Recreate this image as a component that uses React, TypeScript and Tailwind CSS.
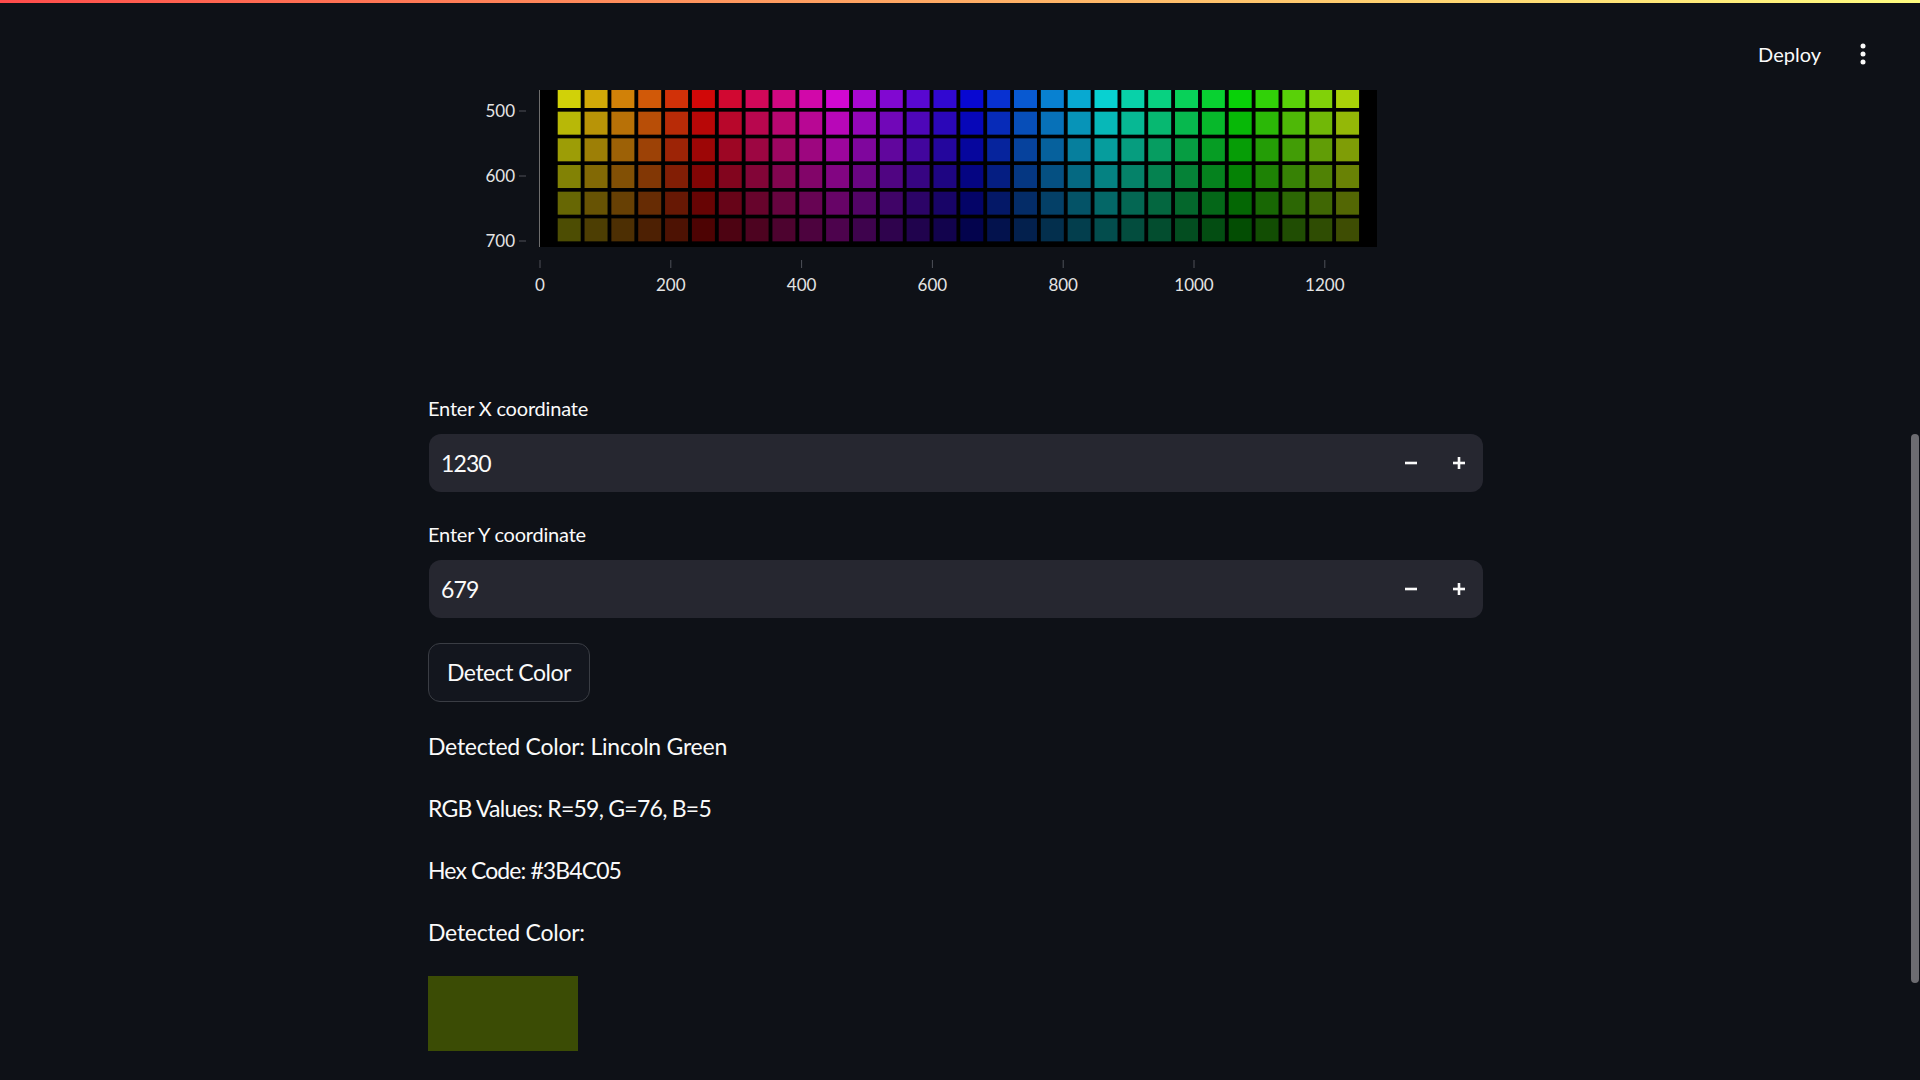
import React from 'react'

const COLS = 30
const VALUES = [0.82, 0.72, 0.615, 0.51, 0.405, 0.3]

// page -> svg coords (svg sits at x=428, y=90)
const OX = 428
const OY = 90

function hsv(h: number, s: number, v: number) {
  const hh = ((h % 360) + 360) % 360
  const c = v * s
  const x = c * (1 - Math.abs(((hh / 60) % 2) - 1))
  const m = v - c
  let r = 0, g = 0, b = 0
  if (hh < 60) [r, g, b] = [c, x, 0]
  else if (hh < 120) [r, g, b] = [x, c, 0]
  else if (hh < 180) [r, g, b] = [0, c, x]
  else if (hh < 240) [r, g, b] = [0, x, c]
  else if (hh < 300) [r, g, b] = [x, 0, c]
  else [r, g, b] = [c, 0, x]
  const to = (n: number) => Math.round((n + m) * 255)
  return `rgb(${to(r)},${to(g)},${to(b)})`
}

function ColorChart() {
  const xOf = (t: number) => 540 - OX + t * 0.654
  const yOf = (t: number) => 241 - OY - (700 - t) * 0.65
  const xTicks = [0, 200, 400, 600, 800, 1000, 1200]
  const yTicks = [500, 600, 700]

  return (
    <svg width={1055} height={305} className="block" fontFamily="Lato, sans-serif">
      <rect x={112} y={-10} width={837} height={167} fill="#000" />
      {VALUES.map((v, k) =>
        Array.from({ length: COLS }, (_, i) => (
          <rect
            key={`${k}-${i}`}
            x={129.7 + 26.84 * i}
            y={-5 + 26.67 * k}
            width={23}
            height={23}
            fill={hsv(60 - 12 * i, 0.96, v)}
          />
        ))
      )}
      <line x1={111.5} y1={0} x2={111.5} y2={157} stroke="#6e6e6e" strokeWidth={1} />

      {yTicks.map((t) => (
        <g key={t}>
          <line x1={91} y1={yOf(t)} x2={98} y2={yOf(t)} stroke="#4e5159" strokeWidth={1} />
          <text x={87} y={yOf(t) + 6.3} textAnchor="end" fontSize={17} fill="#e4e4e4">
            {t}
          </text>
        </g>
      ))}

      {xTicks.map((t) => (
        <g key={t}>
          <line x1={xOf(t)} y1={170} x2={xOf(t)} y2={178} stroke="#4e5159" strokeWidth={1} />
          <text x={xOf(t)} y={200.5} textAnchor="middle" fontSize={17} fill="#e4e4e4">
            {t}
          </text>
        </g>
      ))}
    </svg>
  )
}

function MinusIcon() {
  return (
    <svg width={12} height={12} viewBox="0 0 12 12">
      <rect x={0} y={4.7} width={12} height={2.6} fill="#fafafa" />
    </svg>
  )
}

function PlusIcon() {
  return (
    <svg width={12} height={12} viewBox="0 0 12 12">
      <rect x={0} y={4.7} width={12} height={2.6} fill="#fafafa" />
      <rect x={4.7} y={0} width={2.6} height={12} fill="#fafafa" />
    </svg>
  )
}

function NumberInput({ label, value }: { label: string; value: string }) {
  return (
    <div>
      <div className="h-[28px] leading-[26px] mb-[11px] text-[20px] tracking-[-0.2px]">{label}</div>
      <div className="h-[58px] rounded-[12px] bg-[#262730] flex items-center ml-px">
        <span className="flex-1 pl-[12px] text-[23px] tracking-[-0.9px]">{value}</span>
        <button className="w-[48px] h-full flex items-center justify-center">
          <MinusIcon />
        </button>
        <button className="w-[48px] h-full flex items-center justify-center">
          <PlusIcon />
        </button>
      </div>
    </div>
  )
}

export default function App() {
  return (
    <div className="relative h-[1080px] overflow-hidden bg-[#0e1117] text-[#fafafa] font-[Lato,sans-serif]">
      <div className="h-[3px] bg-gradient-to-r from-[#ff4b4b] to-[#fffd80]" />

      <header className="h-[87px] flex items-start justify-end pt-[36px] pr-[52px]">
        <div className="h-[30px] flex items-center gap-[37px]">
          <span className="text-[20px] leading-[30px]">Deploy</span>
          <svg width={10} height={26} viewBox="0 0 10 26">
            <circle cx={5} cy={5} r={2.5} fill="#fafafa" />
            <circle cx={5} cy={13} r={2.5} fill="#fafafa" />
            <circle cx={5} cy={21} r={2.5} fill="#fafafa" />
          </svg>
        </div>
      </header>

      <div className="w-[1911px] flex justify-center">
        <main className="w-[1055px] flex flex-col">
          <ColorChart />

          <NumberInput label="Enter X coordinate" value="1230" />
          <div className="h-[29px]" />
          <NumberInput label="Enter Y coordinate" value="679" />

          <div className="h-[25px]" />
          <button className="self-start h-[59px] px-[18px] rounded-[12px] border border-[#3a3d44] bg-[#13161e] text-[23px] tracking-[-0.5px]">
            Detect Color
          </button>

          <div className="h-[26px]" />
          <p className="h-[36px] leading-[36px] mb-[26px] text-[23px] tracking-[-0.25px]">
            Detected Color: Lincoln Green
          </p>
          <p className="h-[36px] leading-[36px] mb-[26px] text-[23px] tracking-[-0.75px]">
            RGB Values: R=59, G=76, B=5
          </p>
          <p className="h-[36px] leading-[36px] mb-[26px] text-[23px] tracking-[-0.9px]">
            Hex Code: #3B4C05
          </p>
          <p className="h-[36px] leading-[36px] mb-[26px] text-[23px] tracking-[-0.25px]">
            Detected Color:
          </p>
          <div className="w-[150px] h-[75px] bg-[#3b4c05]" />
        </main>
      </div>

      <div className="absolute right-[1px] top-[434px] w-[8px] h-[549px] rounded-full bg-[#6c6c71]" />
    </div>
  )
}
